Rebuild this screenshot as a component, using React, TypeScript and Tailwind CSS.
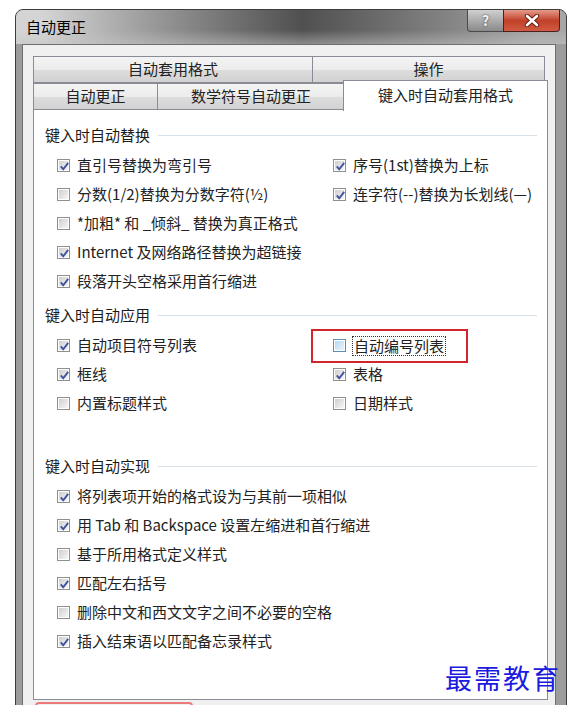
import React from 'react';

interface CheckProps {
  checked: boolean;
  focus?: boolean;
}

const Check: React.FC<CheckProps> = ({ checked, focus }) => (
  <span
    className={`relative flex h-[13px] w-[13px] shrink-0 items-center justify-center border bg-white ${
      focus ? 'border-[#5b8fb8]' : 'border-[#8e8f8f]'
    }`}
  >
    <span
      className={`h-[9px] w-[9px] ${
        focus
          ? 'bg-[linear-gradient(135deg,#b6d9f1,#e8f4fc)]'
          : 'bg-[linear-gradient(135deg,#cfcfcf,#f6f6f6)]'
      }`}
    />
    {checked && (
      <svg className="absolute inset-0" width="13" height="13" viewBox="0 0 13 13">
        <path d="M2.8 6.4 L5.2 9.3 L10.2 2.9" fill="none" stroke="#3f52a0" strokeWidth="1.9" />
      </svg>
    )}
  </span>
);

interface RowProps {
  label: string;
  checked: boolean;
  focus?: boolean;
  marked?: boolean;
}

const Row: React.FC<RowProps> = ({ label, checked, focus, marked }) => (
  <div className="relative flex h-[29px] items-center gap-[6px]">
    <Check checked={checked} focus={focus} />
    <span className={focus ? 'border border-dotted border-[#333] px-[1px] leading-[18px]' : 'pl-[1px]'}>
      {label}
    </span>
    {marked && (
      <div className="absolute -left-[22px] -top-[2px] h-[34px] w-[157px] border-2 border-[#d3232c]" />
    )}
  </div>
);

const GroupLabel: React.FC<{ text: string; className?: string }> = ({ text, className }) => (
  <div className={`flex h-[20px] items-center gap-[8px] ${className ?? ''}`}>
    <span className="text-[#1b1b1b]">{text}</span>
    <div className="h-px flex-1 bg-[#d8e1e8]" />
  </div>
);

const replaceLeft: RowProps[] = [
  { label: '直引号替换为弯引号', checked: true },
  { label: '分数(1/2)替换为分数字符(½)', checked: false },
  { label: '*加粗* 和 _倾斜_ 替换为真正格式', checked: false },
  { label: 'Internet 及网络路径替换为超链接', checked: true },
  { label: '段落开头空格采用首行缩进', checked: true },
];

const replaceRight: RowProps[] = [
  { label: '序号(1st)替换为上标', checked: true },
  { label: '连字符(--)替换为长划线(—)', checked: true },
];

const applyLeft: RowProps[] = [
  { label: '自动项目符号列表', checked: true },
  { label: '框线', checked: true },
  { label: '内置标题样式', checked: false },
];

const applyRight: RowProps[] = [
  { label: '自动编号列表', checked: false, focus: true, marked: true },
  { label: '表格', checked: true },
  { label: '日期样式', checked: false },
];

const doLeft: RowProps[] = [
  { label: '将列表项开始的格式设为与其前一项相似', checked: true },
  { label: '用 Tab 和 Backspace 设置左缩进和首行缩进', checked: true },
  { label: '基于所用格式定义样式', checked: false },
  { label: '匹配左右括号', checked: true },
  { label: '删除中文和西文文字之间不必要的空格', checked: false },
  { label: '插入结束语以匹配备忘录样式', checked: true },
];

const tabBase =
  'flex items-center justify-center border border-[#898c95] bg-[linear-gradient(180deg,#f4f4f4_0%,#ececec_50%,#dddddd_51%,#d2d2d2_100%)]';

export default function App() {
  return (
    <div
      className="relative h-[705px] w-[567px] overflow-hidden bg-white text-[15px] text-[#222]"
      style={{ fontFamily: '"Noto Sans CJK SC", "Noto Sans", sans-serif' }}
    >
      <div className="ml-[15px] mt-[9px] h-[720px] w-[552px] rounded-t-[8px] border border-[#3d3d3d] bg-[#9c9c9c]">
        {/* title bar */}
        <div className="relative h-[34px] rounded-t-[7px]">
          <div className="absolute inset-0 rounded-t-[7px] bg-linear-to-r from-[#d4d4d4] from-5% via-[#505050] via-52% to-[#a6a6a6] to-95%" />
          <div className="absolute inset-x-0 bottom-0 h-[14px] bg-linear-to-b from-[#c4c4c4]/0 to-[#c4c4c4]/50" />
          <div className="relative flex h-full items-start justify-between pl-[10px] pr-[6px]">
            <span className="mt-[6px] text-black">自动更正</span>
            <div className="flex">
              <div className="flex h-[22px] w-[37px] items-center justify-center rounded-bl-[4px] border border-t-0 border-[#4a4a4a] bg-linear-to-b from-[#d0d0d0] to-[#8a8a8a] text-[14px] font-bold text-[#f2f2f2] [text-shadow:0_0_2px_#333]">
                ?
              </div>
              <div className="-ml-px flex h-[22px] w-[57px] items-center justify-center rounded-br-[4px] border border-t-0 border-[#4a2020] bg-linear-to-b from-[#e49a8a] via-[#c0402a] to-[#d25a42]">
                <svg width="16" height="13" viewBox="0 0 16 13">
                  <path d="M3 2 L13 11 M13 2 L3 11" stroke="#6a1a10" strokeWidth="4.4" strokeLinecap="round" />
                  <path d="M3 2 L13 11 M13 2 L3 11" stroke="#ffffff" strokeWidth="2.6" strokeLinecap="round" />
                </svg>
              </div>
            </div>
          </div>
        </div>

        {/* client area */}
        <div className="ml-[6px] h-[700px] w-[534px] border border-[#6e6e6e] bg-[#f0f0f0] pl-[10px] pt-[11px]">
          <div className="flex h-[27px] w-[512px]">
            <div className={`${tabBase} w-[280px]`}>自动套用格式</div>
            <div className={`${tabBase} -ml-px w-[233px]`}>操作</div>
          </div>
          <div className="-mt-px flex h-[28px] items-start">
            <div className={`${tabBase} mt-[1px] h-[27px] w-[125px]`}>自动更正</div>
            <div className={`${tabBase} -ml-px mt-[1px] h-[27px] w-[188px]`}>数学符号自动更正</div>
            <div className="relative z-10 -ml-[2px] -mt-[2px] flex h-[31px] w-[205px] items-center justify-center border border-b-0 border-[#898c95] bg-white pb-[2px]">
              键入时自动套用格式
            </div>
          </div>

          {/* panel */}
          <div className="-mt-px h-[591px] w-[515px] border border-[#898c95] bg-white pl-[11px] pr-[10px] pt-[15px]">
            <GroupLabel text="键入时自动替换" />
            <div className="mt-[6px] flex pl-[12px]">
              <div className="w-[276px]">
                {replaceLeft.map((r) => (
                  <Row key={r.label} {...r} />
                ))}
              </div>
              <div>
                {replaceRight.map((r) => (
                  <Row key={r.label} {...r} />
                ))}
              </div>
            </div>

            <GroupLabel text="键入时自动应用" className="mt-[9px]" />
            <div className="mt-[6px] flex pl-[12px]">
              <div className="w-[276px]">
                {applyLeft.map((r) => (
                  <Row key={r.label} {...r} />
                ))}
              </div>
              <div>
                {applyRight.map((r) => (
                  <Row key={r.label} {...r} />
                ))}
              </div>
            </div>

            <GroupLabel text="键入时自动实现" className="mt-[38px]" />
            <div className="mt-[6px] pl-[12px]">
              {doLeft.map((r) => (
                <Row key={r.label} {...r} />
              ))}
            </div>
          </div>
        </div>
      </div>

      {/* watermark */}
      <div
        className="absolute left-[445px] top-[658px] text-[27px] tracking-[2px] text-[#1a1ae0]"
        style={{ fontFamily: '"Noto Sans CJK SC", serif' }}
      >
        最需教育
      </div>
      <div className="absolute left-[35px] top-[702px] h-[10px] w-[158px] rounded-[4px] border-2 border-[#ec7a7a]" />
    </div>
  );
}
